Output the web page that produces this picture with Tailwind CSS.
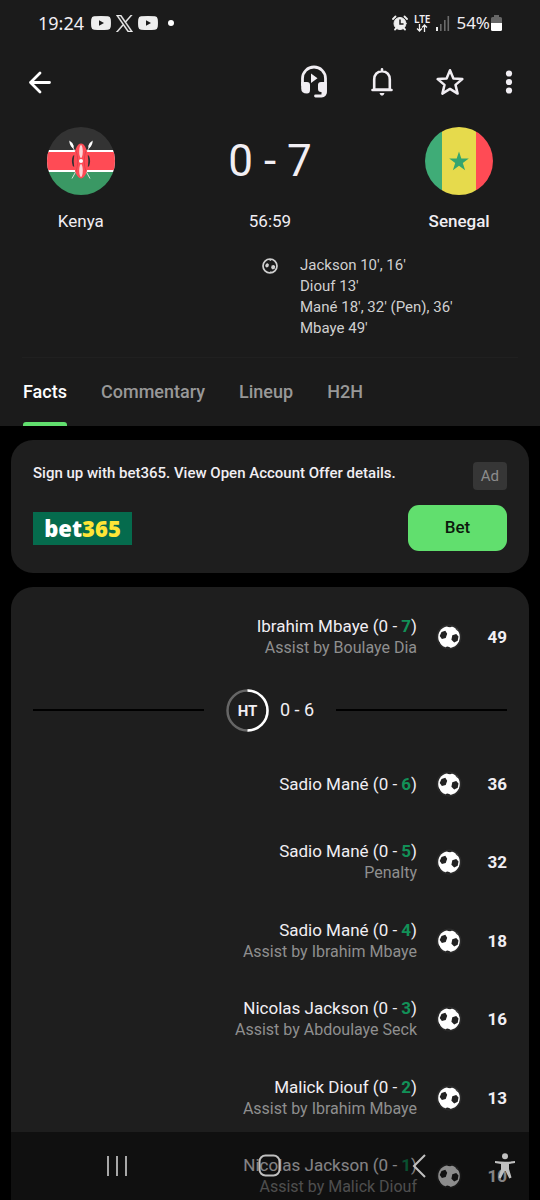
<!DOCTYPE html>
<html lang="en">
<head>
<meta charset="utf-8">
<meta name="viewport" content="width=device-width, initial-scale=1">
<title>Kenya 0 - 7 Senegal</title>
<script src="https://cdn.jsdelivr.net/npm/@tailwindcss/browser@4"></script>
</head>
<body class="flex h-screen flex-col overflow-hidden bg-black font-['Roboto',sans-serif] text-[#f1eef3]">

<!-- Shared symbols -->
<svg class="hidden" aria-hidden="true">
  <symbol id="ball" viewBox="0 0 26 26">
    <circle cx="13" cy="13" r="12.5" fill="#2c2c2c"/>
    <circle cx="13" cy="13" r="10.8" fill="#fff"/>
    <path fill="#222" d="M5.500 8l3.800-1.200 1.900 3-1.500 4.300-3.800 1-2.200-3zM16.300 11.200l3.900-1.200 2.300 2.500-.8 4.300-3.500 1.700-2.800-2.700zM10.500 1.800l3.300-.1 2.500.6-2 1-2.200-.2zM19.500 4l2.800 3-1-.3-1.500-1.500zM2 16.500l1.500 1.200.8 2.500-1.200-.7zM9.500 23l2.300-.6 2.300 1-.2 1.200-3.400-.1z"/>
  </symbol>
  <symbol id="youtube" viewBox="0 0 20 14">
    <path fill="#eee" d="M3 .3Q10-.3 17 .3 19.300.5 19.700 3q.5 4 0 8-.4 2.500-2.700 2.700-7 .6-14 0Q.7 13.500.3 11q-.5-4 0-8Q.7.5 3 .3z"/>
    <path fill="#1b1b1b" d="M8 4.300v5.400L13 7z"/>
  </symbol>
</svg>

<header class="shrink-0 bg-[#1b1b1b]">
  <!-- Status bar -->
  <div class="flex h-[46px] items-center justify-between pl-[38px] pr-[38px] font-['Noto_Sans',sans-serif]">
    <div class="flex items-center gap-[5px]">
      <span class="mr-[2px] text-[18px] leading-6">19:24</span>
      <svg class="h-[14px] w-[20px]"><use href="#youtube"/></svg>
      <svg class="h-[17px] w-[17px]" viewBox="0 0 24 24" fill="#eee" stroke="#eee" stroke-width=".6"><path d="M14.230 10.160L22.980 0h-2.070l-7.600 8.820L7.240 0H.240l9.180 13.340L.240 24h2.070l8.030-9.320L16.750 24h7L14.230 10.160zm-2.840 3.300l-.93-1.330L3.060 1.560h3.190l5.970 8.540.93 1.330 7.760 11.100h-3.190l-6.330-9.070z"/></svg>
      <svg class="h-[14px] w-[20px]"><use href="#youtube"/></svg>
      <span class="ml-[5px] size-[6px] rounded-full bg-white"></span>
    </div>
    <div class="flex items-center">
      <svg class="size-[16px]" viewBox="0 0 16 16" fill="none" stroke="#eee" stroke-linecap="round"><circle cx="8" cy="8.500" r="6" fill="#eee"/><path d="M1 4l2.500-2.500M15 4l-2.500-2.500M3 14.500l1.500-1.500M13 14.500l-1.500-1.500" stroke-width="1.800"/><path d="M8 5v4h3" stroke="#1b1b1b" stroke-width="1.500"/></svg>
      <span class="ml-[6px] flex flex-col items-center text-[10px] font-semibold leading-[10px]">LTE
        <svg class="h-[8px] w-[12px]" viewBox="0 0 12 8" fill="none" stroke="#eee" stroke-width="1.300"><path d="M3.500 0v7M1 4.500L3.500 7 6 4.500M8.500 8V1M6 3.500L8.500 1 11 3.500"/></svg>
      </span>
      <svg class="ml-[5px] h-[16px] w-[15px]" viewBox="0 0 15 16"><path d="M1 12h2v4H1z" fill="#eee"/><path d="M5 9h1.600v7H5zM9 5h1.600v11H9zM12.500 1h1.600v15h-1.600z" fill="#6b6b6b"/></svg>
      <span class="ml-[6px] text-[17px] leading-6">54%</span>
      <svg class="ml-[1px] h-[16px] w-[11px]" viewBox="0 0 11 16"><path d="M3 0h5v2h1.500Q11 2 11 3.500V8H0V3.500Q0 2 1.500 2H3z" fill="#666"/><path d="M0 8h11v6.500q0 1.500-1.500 1.500h-8Q0 16 0 14.500z" fill="#fff"/></svg>
    </div>
  </div>

  <!-- Toolbar -->
  <div class="flex h-[72px] items-center justify-between pl-[26px] pr-[18px]">
    <button aria-label="Back"><svg class="size-[26px]" viewBox="0 0 26 26" fill="none" stroke="#fff" stroke-width="2.800" stroke-linecap="round" stroke-linejoin="round"><path d="M23.500 13.500H4.500M14 4L4.500 13.500 14 23"/></svg></button>
    <div class="flex items-center">
      <button aria-label="Audio commentary"><svg class="h-[34px] w-[28px]" viewBox="0 0 28 34"><path d="M2.500 20v-6.500a11.500 11.500 0 0 1 23 0V26q0 5-4 5h-6" fill="none" stroke="#f1eef3" stroke-width="2.800" stroke-linecap="round"/><path d="M1.200 17H7q3 0 3 3v5q0 3.500-3 3.500-5.800 0-5.800-5zM26.800 17H21q-3 0-3 3v4q0 3 3 3h.5v4h2q3.300-1 3.300-5zM11 8.500v9.500l6.500-4.700z" fill="#f1eef3"/></svg></button>
      <button aria-label="Notifications" class="ml-[41px]"><svg class="h-[30px] w-[26px]" viewBox="0 0 26 30" fill="none" stroke="#f1eef3" stroke-width="2.600" stroke-linecap="round" stroke-linejoin="round"><path d="M13 4.300c-5 0-7.800 3.500-7.800 8.200v10h15.600v-10c0-4.700-2.800-8.200-7.800-8.200zM3.500 23h19M13 2.300v2" /><path d="M10.500 26h5q-.6 2.700-2.500 2.700T10.500 26z" fill="#f1eef3" stroke="none"/></svg></button>
      <button aria-label="Favourite" class="ml-[41px]"><svg class="size-[28px]" viewBox="0 0 28 28" fill="none" stroke="#f1eef3" stroke-width="2.500" stroke-linejoin="round"><path d="M14 2.200l3.400 8.200 8.900.7-6.800 5.800 2.100 8.700L14 20.900l-7.600 4.700 2.100-8.700-6.800-5.800 8.900-.7z"/></svg></button>
      <button aria-label="More options" class="ml-[32px]"><svg class="h-[26px] w-[26px]" viewBox="0 0 26 26" fill="#f1eef3"><circle cx="13" cy="4.500" r="3.100"/><circle cx="13" cy="13" r="3.100"/><circle cx="13" cy="21.500" r="3.100"/></svg></button>
    </div>
  </div>

  <!-- Score -->
  <div class="grid grid-cols-[1fr_1.340fr_1fr] pt-[9px] text-center">
    <div class="flex flex-col items-center">
      <svg class="size-[68px]" viewBox="0 0 68 68"><clipPath id="disc"><circle cx="34" cy="34" r="34"/></clipPath><g clip-path="url(#disc)"><path fill="#333" d="M0 0h68v24H0z"/><path fill="#fff" d="M0 23h68v22H0z"/><path fill="#ff4b55" d="M0 25h68v18H0z"/><path fill="#3a9864" d="M0 45h68v23H0z"/></g>
        <path d="M43 19L25 51.500M25 19l18 32.500" stroke="#e8e8e8" stroke-width=".9"/><path fill="#fff" d="M22.300 13.500q3.500 2 4.500 5.500l-.5 2.500q-4-3-4-8zM45.700 13.500q-3.500 2-4.500 5.500l.5 2.500q4-3 4-8z"/><ellipse cx="27.300" cy="34" rx="2.400" ry="6" fill="#333"/><ellipse cx="40.700" cy="34" rx="2.400" ry="6" fill="#333"/><ellipse cx="34" cy="34" rx="7.300" ry="17.500" fill="#ff4b55"/><path d="M28.800 23q4 11 0 22M39.200 23q-4 11 0 22" fill="none" stroke="#d93f49" stroke-width=".8"/><ellipse cx="34" cy="24.500" rx="1.800" ry="6.500" fill="#fbd5d7"/><ellipse cx="34" cy="43.500" rx="1.800" ry="6.500" fill="#fbd5d7"/><circle cx="34" cy="34" r="2" fill="#fff"/></svg>
      <div class="mt-[15px] text-[17px] leading-[22px]">Kenya</div>
    </div>
    <div>
      <div class="text-[44px] leading-[68px]">0 - 7</div>
      <div class="mt-[15px] text-[17px] leading-[22px]">56:59</div>
    </div>
    <div class="flex flex-col items-center">
      <svg class="size-[68px]" viewBox="0 0 68 68"><g clip-path="url(#disc)"><path fill="#3fac77" d="M0 0h17v68H0z"/><path fill="#e6da4c" d="M17 0h34v68H17z"/><path fill="#ff4b55" d="M51 0h17v68H51z"/></g><path fill="#34a56f" d="M34 24.500l2.300 7h7.500l-6 4.400 2.300 7.300L34 38.800l-6.100 4.400 2.300-7.300-6-4.400h7.500z"/></svg>
      <div class="mt-[15px] text-[17px] font-medium leading-[22px]">Senegal</div>
    </div>
  </div>
  <div class="mx-[22px] mt-[23px] grid grid-cols-[1fr_16px_1fr] border-b border-[#202020] pb-[18px]">
    <svg class="col-start-2 mt-[3px] size-[16px]" viewBox="0 0 16 16"><circle cx="8" cy="8" r="7" fill="none" stroke="#d0d0d0" stroke-width="1.700"/><path fill="#d0d0d0" d="M4 5.800l1.800-.5 1.200 1.400-.8 2.400-1.800.5-1.300-1.500zM9.600 7.500l2.300-.5 1.300 1.200-.5 2.500-2.100.7-1.500-1.500zM5.500 1l5 .2L8.500 3zM5.500 15l3.500-1.700 1.500 1.500z"/></svg>
    <ul class="pl-[22px] text-[15px] leading-[21px] text-[#d0d0d0]">
      <li>Jackson 10', 16'</li><li>Diouf 13'</li><li>Mané 18', 32' (Pen), 36'</li><li>Mbaye 49'</li>
    </ul>
  </div>

  <!-- Tabs -->
  <nav class="flex gap-[34px] px-[23px] text-[18px] font-medium leading-6 text-[#989898]">
    <a href="#" class="flex flex-col text-white"><span class="pt-[22px] pb-[18px]">Facts</span><span class="mt-auto h-[4px] rounded-t-[3px] bg-[#61df6e]"></span></a>
    <a href="#" class="pt-[22px]">Commentary</a>
    <a href="#" class="pt-[22px]">Lineup</a>
    <a href="#" class="pt-[22px]">H2H</a>
  </nav>
</header>

<main class="flex min-h-0 flex-1 flex-col gap-[14px] overflow-y-auto px-[11px] pt-[14px] [scrollbar-width:none]">
  <!-- Advert -->
  <section class="shrink-0 rounded-[22px] bg-[#1e1e1e] px-[22px] pt-[22px] pb-[22px]">
    <div class="flex items-start justify-between">
      <h2 class="text-[15px] font-medium leading-[22px]">Sign up with bet365. View Open Account Offer details.</h2>
      <span class="rounded-[4px] bg-[#363636] px-[8px] text-[15px] leading-[28px] text-[#8c8c8c]">Ad</span>
    </div>
    <div class="mt-[15px] flex items-center justify-between">
      <a href="#" class="flex h-[33px] w-[99px] items-center justify-center bg-[#056b4d] font-['Noto_Sans',sans-serif] text-[22px] font-black leading-[33px] text-white">bet<span class="text-[#ffe536]">365</span></a>
      <button class="h-[46px] w-[99px] rounded-[11px] bg-[#61df6e] text-[17px] font-medium text-[#0c1a0d]">Bet</button>
    </div>
  </section>

  <!-- Match events -->
  <section class="shrink-0 rounded-[22px] bg-[#1e1e1e] px-[22px] py-[10px]">
    <ol class="text-[17px] leading-[22px]">
      <li class="flex min-h-[79px] items-center justify-end text-right"><div><p>Ibrahim Mbaye (0 - <b class="text-[#129158]">7</b>)</p><p class="text-[16px] text-[#8f8f8f]">Assist by Boulaye Dia</p></div><svg class="ml-[19px] size-[26px]"><use href="#ball"/></svg><b class="w-[45px]">49</b></li>
      <li class="grid h-[68px] grid-cols-[1fr_auto_1fr] items-center">
        <span class="h-[2px] bg-black"></span>
        <div class="flex items-center gap-[11px] px-[22px]">
          <svg class="size-[43px] shrink-0" viewBox="0 0 43 43" role="img" aria-label="Half time"><circle cx="21.500" cy="21.500" r="20" fill="none" stroke="#666" stroke-width="2.500"/><path d="M21.500 1.500a20 20 0 0 1 0 40" fill="none" stroke="#fff" stroke-width="2.500"/><text x="21.500" y="27" text-anchor="middle" fill="#f1eef3" font-size="15" font-weight="700">HT</text></svg>
          <span class="text-[18px]">0 - 6</span>
        </div>
        <span class="h-[2px] bg-black"></span>
      </li>
      <li class="flex min-h-[79px] items-center justify-end text-right"><div><p>Sadio Mané (0 - <b class="text-[#129158]">6</b>)</p></div><svg class="ml-[19px] size-[26px]"><use href="#ball"/></svg><b class="w-[45px]">36</b></li>
      <li class="flex min-h-[78px] items-center justify-end text-right"><div><p>Sadio Mané (0 - <b class="text-[#129158]">5</b>)</p><p class="text-[16px] text-[#8f8f8f]">Penalty</p></div><svg class="ml-[19px] size-[26px]"><use href="#ball"/></svg><b class="w-[45px]">32</b></li>
      <li class="flex min-h-[79px] items-center justify-end text-right"><div><p>Sadio Mané (0 - <b class="text-[#129158]">4</b>)</p><p class="text-[16px] text-[#8f8f8f]">Assist by Ibrahim Mbaye</p></div><svg class="ml-[19px] size-[26px]"><use href="#ball"/></svg><b class="w-[45px]">18</b></li>
      <li class="flex min-h-[78px] items-center justify-end text-right"><div><p>Nicolas Jackson (0 - <b class="text-[#129158]">3</b>)</p><p class="text-[16px] text-[#8f8f8f]">Assist by Abdoulaye Seck</p></div><svg class="ml-[19px] size-[26px]"><use href="#ball"/></svg><b class="w-[45px]">16</b></li>
      <li class="flex min-h-[79px] items-center justify-end text-right"><div><p>Malick Diouf (0 - <b class="text-[#129158]">2</b>)</p><p class="text-[16px] text-[#8f8f8f]">Assist by Ibrahim Mbaye</p></div><svg class="ml-[19px] size-[26px]"><use href="#ball"/></svg><b class="w-[45px]">13</b></li>
      <li class="flex min-h-[78px] items-center justify-end text-right"><div><p>Nicolas Jackson (0 - <b class="text-[#129158]">1</b>)</p><p class="text-[16px] text-[#8f8f8f]">Assist by Malick Diouf</p></div><svg class="ml-[19px] size-[26px]"><use href="#ball"/></svg><b class="w-[45px]">10</b></li>
    </ol>
  </section>
</main>

<!-- System navigation, translucent over the list -->
<div class="fixed inset-x-0 bottom-0 grid h-[68px] grid-cols-[128px_1fr_128px] items-center bg-black/45">
  <button aria-label="Recent apps" class="justify-self-end"><svg class="h-[24px] w-[22px]" viewBox="0 0 22 24" stroke="#b9b9b9" stroke-width="1.800"><path d="M2 2v20M11 2v20M20 2v20"/></svg></button>
  <button aria-label="Home" class="justify-self-center"><svg class="size-[24px]" viewBox="0 0 24 24" fill="none" stroke="#c0c0c0" stroke-width="2"><rect x="1.500" y="1.500" width="20" height="20" rx="6"/></svg></button>
  <div class="flex items-center justify-between pr-[25px]">
    <button aria-label="Go back"><svg class="h-[24px] w-[14px]" viewBox="0 0 14 24" fill="none" stroke="#c0c0c0" stroke-width="2"><path d="M13 1L2 12l11 11"/></svg></button>
    <button aria-label="Accessibility"><svg class="h-[26px] w-[20px]" viewBox="0 0 20 26" fill="#c0c0c0"><circle cx="10" cy="3.200" r="3"/><path d="M0 8q10 1.500 20 0v2l-6 1v5l2.500 8.500-2.200 1L10.500 18h-1L5.700 25.500l-2.200-1L6 16v-5L0 10z"/></svg></button>
  </div>
</div>
</body>
</html>
